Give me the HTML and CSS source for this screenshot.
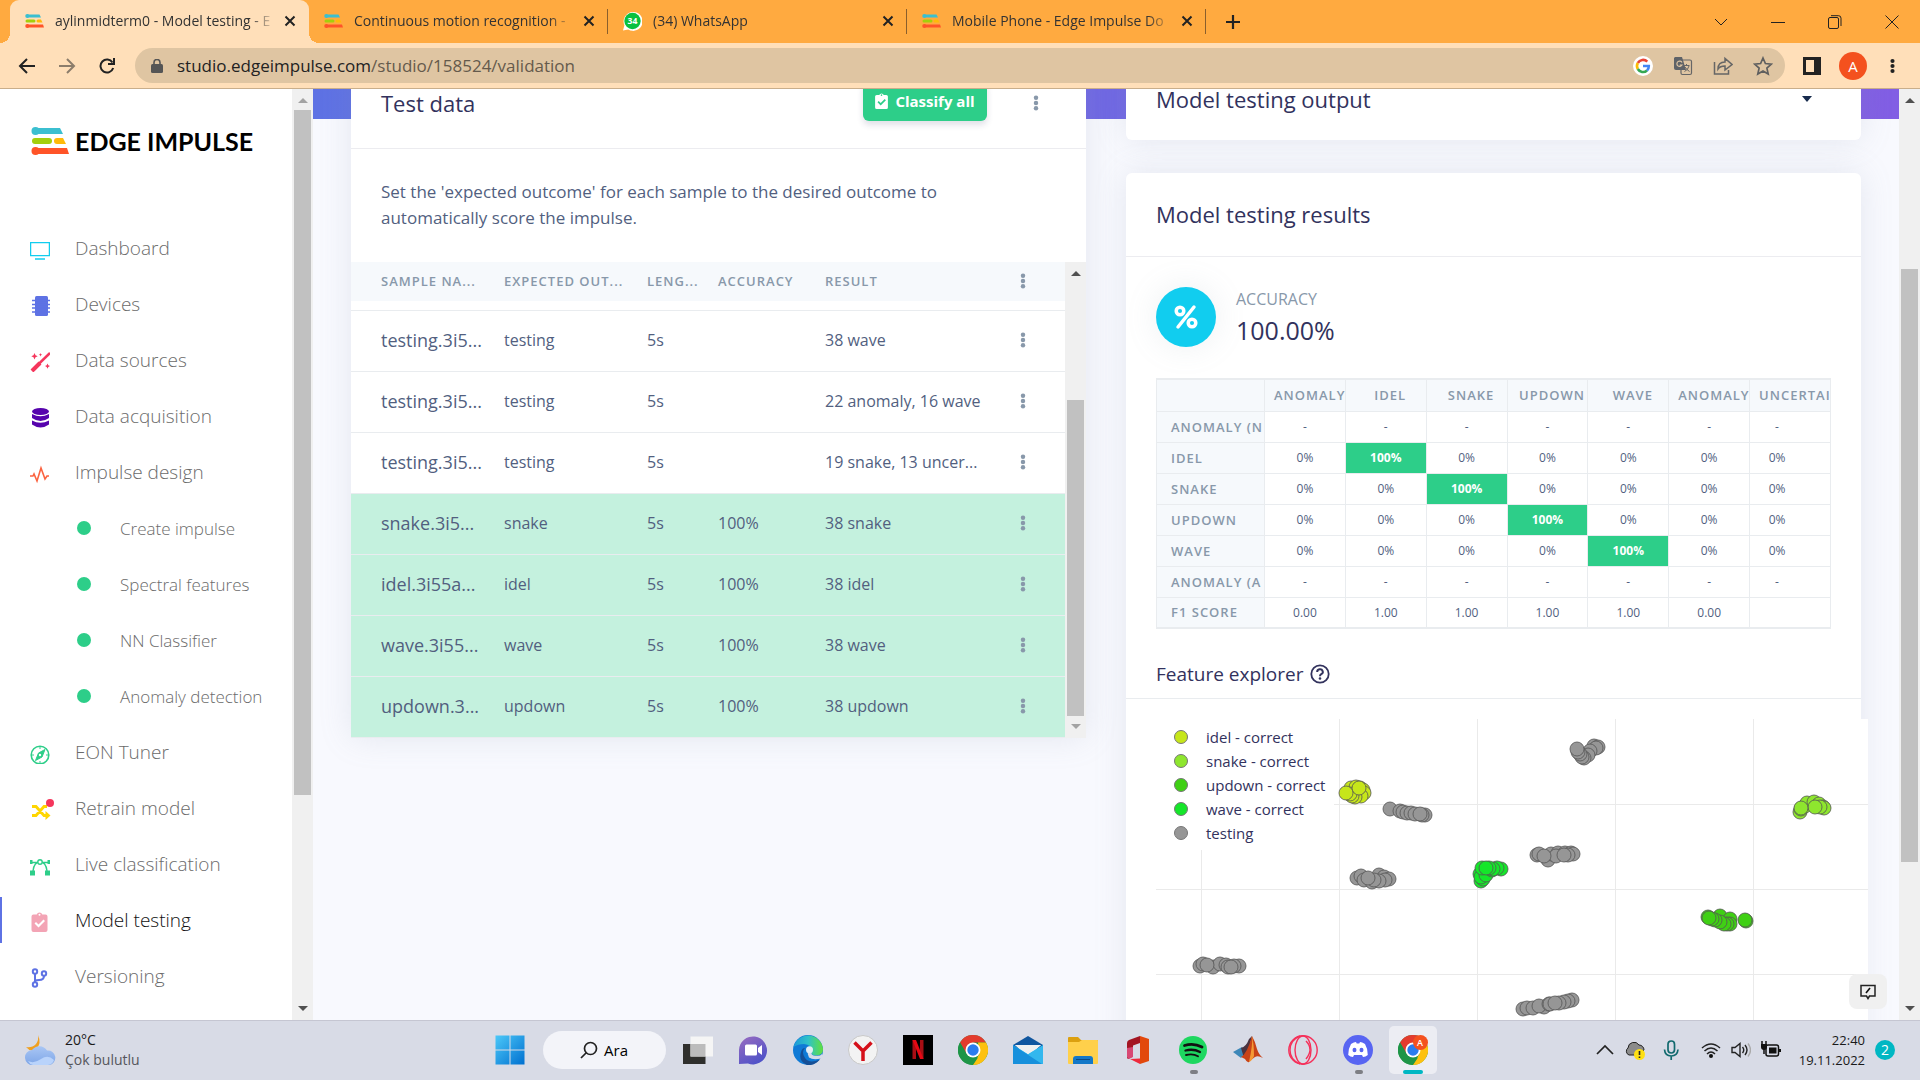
FILE: index.html
```html
<!DOCTYPE html>
<html lang="en">
<head>
<meta charset="utf-8">
<title>aylinmidterm0 - Model testing - Edge Impulse</title>
<link rel="stylesheet" href="styles.css">
</head>
<body>
<svg class="defs" aria-hidden="true">
  <symbol id="ei" viewBox="0 0 38 28"><path d="M4 1H29l3 6H4z" fill="#3bbfd0"/><circle cx="4.500" cy="4" r="4" fill="#3bbfd0"/><rect x="1" y="11" width="20" height="6" rx="3" fill="#a4cf0c"/><path d="M26 11h6l3 6H26a3 3 0 0 1 0-6z" fill="#ffba08"/><path d="M4 21H36l2 6H4z" fill="#ff5428"/><circle cx="4.500" cy="24" r="4" fill="#ff5428"/></symbol>
  <symbol id="x" viewBox="0 0 12 12"><path d="M1.500 1.500l9 9M10.500 1.500l-9 9" stroke="#222" stroke-width="2" fill="none"/></symbol>
  <symbol id="dots" viewBox="0 0 6 18"><circle cx="3" cy="3" r="2.500"/><circle cx="3" cy="9" r="2.500"/><circle cx="3" cy="15" r="2.500"/></symbol>
  <symbol id="clip" viewBox="0 0 16 20"><path fill-rule="evenodd" d="M2 2.500h3.200a3 3 0 0 1 5.600 0H14a2 2 0 0 1 2 2V18a2 2 0 0 1-2 2H2a2 2 0 0 1-2-2V4.500a2 2 0 0 1 2-2zM8 1.700a1 1 0 1 0 0 2 1 1 0 0 0 0-2zM3 11.500l4 4 6.500-6.500-1.500-1.500-5 5-2.500-2.500z"/></symbol>
  <symbol id="chrome" viewBox="0 0 30 30"><circle cx="15" cy="15" r="15" fill="#1e9547"/><path d="M2 7.500A15 15 0 0 1 28 7.500H15L8.500 18.700z" fill="#e33b2e"/><path d="M28 7.500A15 15 0 0 1 14.500 30L21.500 18.700 20 7.500z" fill="#fdc10f"/><path d="M2 7.500L8.500 18.700 15 22.500H20L15 30A15 15 0 0 1 2 7.500z" fill="#1e9547"/><circle cx="15" cy="15" r="7.500" fill="#fff"/><circle cx="15" cy="15" r="5.700" fill="#2a7cee"/></symbol>
</svg>

<header class="tabstrip">
  <div class="tab active"><svg class="fav"><use href="#ei"/></svg><span>aylinmidterm0 - Model testing - E</span><button aria-label="Close tab"><svg><use href="#x"/></svg></button></div>
  <div class="tab"><svg class="fav"><use href="#ei"/></svg><span>Continuous motion recognition -</span><button aria-label="Close tab"><svg><use href="#x"/></svg></button></div>
  <div class="tab"><svg class="fav wa" viewBox="0 0 20 20"><path d="M0 20l1.500-5.500A10 10 0 1 1 5.500 19z" fill="#fff"/><circle cx="10" cy="10" r="8.600" fill="#09c13f"/><text x="10" y="13.500" text-anchor="middle">34</text></svg><span>(34) WhatsApp</span><button aria-label="Close tab"><svg><use href="#x"/></svg></button></div>
  <div class="tab"><svg class="fav"><use href="#ei"/></svg><span>Mobile Phone - Edge Impulse Do</span><button aria-label="Close tab"><svg><use href="#x"/></svg></button></div>
  <button class="newtab" aria-label="New tab"><svg viewBox="0 0 16 16"><path d="M8 1v14M1 8h14" stroke="#222" stroke-width="2.200"/></svg></button>
  <div class="winbtns">
    <button aria-label="Search tabs"><svg viewBox="0 0 14 14"><path d="M1 4l6 6 6-6"/></svg></button>
    <button aria-label="Minimize"><svg viewBox="0 0 14 14"><path d="M0 7.500h14"/></svg></button>
    <button aria-label="Restore"><svg viewBox="0 0 14 14"><rect x=".5" y="2.500" width="10" height="11" rx="1.500"/><path d="M3 .7h7.500a2.500 2.500 0 0 1 2.500 2.500V11"/></svg></button>
    <button aria-label="Close"><svg viewBox="0 0 14 14"><path d="M.5.5l13 13M13.500.5l-13 13"/></svg></button>
  </div>
</header>

<nav class="toolbar" aria-label="Browser">
  <button aria-label="Back"><svg viewBox="0 0 18 16"><path d="M17 8H2M9 1L2 8l7 7" stroke="#222"/></svg></button>
  <button aria-label="Forward"><svg viewBox="0 0 18 16"><path d="M1 8h15M9 1l7 7-7 7" stroke="#8c7d6b"/></svg></button>
  <button aria-label="Reload"><svg viewBox="0 0 18 16"><path d="M14.500 4.500A6.500 6.500 0 1 0 15.200 10M16 0v6h-6" stroke="#222"/></svg></button>
  <div class="address">
    <svg class="lock" viewBox="0 0 12 14"><rect y="5" width="12" height="9" rx="1.500" fill="#555"/><path d="M3 6V3.500a3 3 0 0 1 6 0V6" fill="none" stroke="#555" stroke-width="1.600"/></svg>
    <p>studio.edgeimpulse.com<span>/studio/158524/validation</span></p>
    <svg viewBox="0 0 20 20"><circle cx="10" cy="10" r="10" fill="#fff"/><g fill="none" stroke-width="2.600"><path d="M14.300 5.700A6 6 0 0 0 4.800 7" stroke="#ea4335"/><path d="M4.800 7a6 6 0 0 0 0 6" stroke="#fbbc05"/><path d="M4.800 13a6 6 0 0 0 9.200 1.500" stroke="#34a853"/><path d="M14 14.500A6 6 0 0 0 15.800 10H10" stroke="#4285f4"/></g></svg>
    <svg viewBox="0 0 20 20"><rect x="8" y="4" width="10.500" height="14.500" rx="1.500" fill="none" stroke="#666" stroke-width="1.200"/><path d="M2 1h7l4 13H3a2 2 0 0 1-2-2V2z" fill="#5f6368"/><path d="M9 6.500A2.700 2.700 0 1 0 9 9H6.800" stroke="#dfc5a2" fill="none" stroke-width="1.200"/><path d="M10.500 9.500h6M13.500 8v1.500M16 10q-1 4-4.500 5.500M12 11q2 3 4.500 4.500" stroke="#666" fill="none"/></svg>
    <svg viewBox="0 0 20 20"><g fill="none" stroke="#666" stroke-width="1.500"><path d="M1.500 6v12h14v-4"/><path d="M5 13q0-7 7-7V2.500l7 6-7 5.500V10q-5 0-7 3z"/></g></svg>
    <svg viewBox="0 0 20 20"><path d="M10 2l2.400 5.500 6 .6-4.500 4 1.300 5.900L10 14.900 4.800 18l1.300-5.900-4.500-4 6-.6z" fill="none" stroke="#5f5f5f" stroke-width="1.700"/></svg>
  </div>
  <button class="panel" aria-label="Side panel"><svg viewBox="0 0 18 18"><rect x="1.500" y="1.500" width="15" height="15" fill="none" stroke="#222" stroke-width="3"/><path d="M11 0h7v18h-7z" fill="#222"/></svg></button>
  <button class="avatar">A</button>
  <button class="menu" aria-label="Menu"><svg><use href="#dots"/></svg></button>
</nav>

<div class="page">
  <aside class="sidebar">
    <div class="side-body">
      <a class="logo" href="#"><svg><use href="#ei"/></svg>EDGE IMPULSE</a>
      <ul>
        <li><a href="#"><svg viewBox="0 0 20 20"><path d="M.6 2.600h18.800v13H.6zM5 19h10" fill="none" stroke="#11cdef" stroke-width="1.300"/></svg>Dashboard</a></li>
        <li><a href="#"><svg viewBox="0 0 20 20"><rect x="5" width="13" height="20" rx="1.500" fill="#5e72e4"/><path d="M2 4.500h18.500M2 8.500h18.500M2 12h18.500M2 16h18.500" stroke="#5e72e4" stroke-width="1.600"/></svg>Devices</a></li>
        <li><a href="#"><svg viewBox="0 0 20 20"><path d="M2 18.500L20 1" stroke="#f5365c" stroke-width="2.500"/><path d="M2 19l8-8" stroke="#f5365c" stroke-width="4"/><path d="M4.500 1l1 2.200 2.200 1-2.200 1-1 2.300-1-2.300-2.200-1 2.200-1zM17.500 11.500l.8 1.800 1.700.8-1.700.8-.8 1.800-.8-1.800-1.700-.8 1.700-.8zM10.500 1l.5 1.200 1.200.5-1.200.5-.5 1.200-.5-1.200-1.200-.5 1.200-.5z" fill="#f5365c"/></svg>Data sources</a></li>
        <li><a href="#"><svg viewBox="0 0 20 20"><g fill="#5603ad"><ellipse cx="10.500" cy="3.500" rx="8.500" ry="3.500"/><path d="M2 6q8.500 4.500 17 0v4q-8.500 6-17 0z"/><path d="M2 12.500q8.500 4.500 17 0v4q-8.500 6-17 0z"/></g></svg>Data acquisition</a></li>
        <li><a href="#"><svg viewBox="0 0 20 20"><path d="M0 12h3l1-2 3 7 4-13 4 11 2-3h2" fill="none" stroke="#fb6340" stroke-width="1.600"/></svg>Impulse design</a></li>
        <li class="sub"><a href="#"><i></i>Create impulse</a></li>
        <li class="sub"><a href="#"><i></i>Spectral features</a></li>
        <li class="sub"><a href="#"><i></i>NN Classifier</a></li>
        <li class="sub"><a href="#"><i></i>Anomaly detection</a></li>
        <li><a href="#"><svg viewBox="0 0 20 20"><circle cx="10" cy="11" r="8.800" fill="none" stroke="#2dce89" stroke-width="1.600"/><path d="M15 5.500l-3 7.500-6.500 3.500 3-7.500zM10 3v2M10 17v2M2 11h2M16 11h2" fill="#2dce89" stroke="#2dce89"/><circle cx="10" cy="11" r="1.200" fill="#fff"/></svg>EON Tuner</a></li>
        <li><a href="#"><svg class="over" viewBox="0 0 20 20"><path d="M2 6.500h4l8 9h3M2 15.500h4l8-9h3" fill="none" stroke="#ffd600" stroke-width="2.800"/><path d="M15.500 11l5 4.500-5 4.500z" fill="#ffd600"/><circle cx="20" cy="3" r="4" fill="#f5365c"/></svg>Retrain model</a></li>
        <li><a href="#"><svg viewBox="0 0 20 20"><g fill="none" stroke="#2dce89" stroke-width="1.400"><path d="M3 15q1-9 7-9t7 9M2 6.500h16"/><circle cx="10" cy="6" r="2.200" fill="#fff"/></g><path d="M0 14.500h5v5H0zM15 14.500h5v5h-5zM0 4h2.500v4H0zM17.500 4H20v4h-2.500z" fill="#2dce89"/></svg>Live classification</a></li>
        <li class="current"><a href="#"><svg fill="#f3a4b5"><use href="#clip" width="19" height="20"/></svg>Model testing</a></li>
        <li><a href="#"><svg viewBox="0 0 20 20"><g fill="none" stroke="#5e72e4" stroke-width="2"><circle cx="5" cy="3.500" r="2.200"/><circle cx="5" cy="16.500" r="2.200"/><circle cx="14" cy="5.500" r="2.200"/><path d="M5 6v8M14 8q0 4-5 4t-4 2"/></g></svg>Versioning</a></li>
      </ul>
    </div>
    <div class="scroll s1"><b class="up dim"></b><i></i><b class="down"></b></div>
  </aside>

  <main>
    <div class="content">
      <section class="card left">
        <header><h2>Test data</h2><button class="classify"><svg fill="#fff"><use href="#clip"/></svg>Classify all</button><button class="kebab" aria-label="More"><svg><use href="#dots"/></svg></button></header>
        <p class="desc">Set the 'expected outcome' for each sample to the desired outcome to automatically score the impulse.</p>
        <div class="scroller">
          <table class="samples">
            <colgroup><col class="c1"><col class="c2"><col class="c3"><col class="c4"><col class="c5"><col class="c6"></colgroup>
            <thead><tr><th>SAMPLE NA...</th><th>EXPECTED OUT...</th><th>LENG...</th><th>ACCURACY</th><th>RESULT</th><th><button class="kebab" aria-label="Columns"><svg><use href="#dots"/></svg></button></th></tr></thead>
            <tbody>
              <tr class="cut"><td colspan="6"></td></tr>
              <tr><td>testing.3i5...</td><td>testing</td><td>5s</td><td></td><td>38 wave</td><td><button class="kebab" aria-label="More"><svg><use href="#dots"/></svg></button></td></tr>
              <tr><td>testing.3i5...</td><td>testing</td><td>5s</td><td></td><td>22 anomaly, 16 wave</td><td><button class="kebab" aria-label="More"><svg><use href="#dots"/></svg></button></td></tr>
              <tr><td>testing.3i5...</td><td>testing</td><td>5s</td><td></td><td>19 snake, 13 uncer...</td><td><button class="kebab" aria-label="More"><svg><use href="#dots"/></svg></button></td></tr>
              <tr class="ok"><td>snake.3i5...</td><td>snake</td><td>5s</td><td>100%</td><td>38 snake</td><td><button class="kebab" aria-label="More"><svg><use href="#dots"/></svg></button></td></tr>
              <tr class="ok"><td>idel.3i55a...</td><td>idel</td><td>5s</td><td>100%</td><td>38 idel</td><td><button class="kebab" aria-label="More"><svg><use href="#dots"/></svg></button></td></tr>
              <tr class="ok"><td>wave.3i55...</td><td>wave</td><td>5s</td><td>100%</td><td>38 wave</td><td><button class="kebab" aria-label="More"><svg><use href="#dots"/></svg></button></td></tr>
              <tr class="ok"><td>updown.3...</td><td>updown</td><td>5s</td><td>100%</td><td>38 updown</td><td><button class="kebab" aria-label="More"><svg><use href="#dots"/></svg></button></td></tr>
            </tbody>
          </table>
          <div class="scroll s2"><b class="up"></b><i></i><b class="down dim"></b></div>
        </div>
      </section>

      <div class="right">
        <section class="card output"><header><h2>Model testing output</h2><b class="caret"></b></header></section>
        <section class="card results">
          <header><h2>Model testing results</h2></header>
          <div class="body">
            <div class="accuracy"><span class="disc"><svg viewBox="0 0 24 26"><g fill="none" stroke="#fff" stroke-width="3.500" stroke-linecap="round"><path d="M20 3L4 23"/><circle cx="6" cy="7" r="3.800"/><circle cx="18" cy="19" r="3.800"/></g></svg></span><dl><dt>ACCURACY</dt><dd>100.00%</dd></dl></div>
            <table class="matrix">
              <colgroup><col class="first"><col><col><col><col><col><col><col></colgroup>
              <thead><tr><th></th><th>ANOMALY</th><th>IDEL</th><th>SNAKE</th><th>UPDOWN</th><th>WAVE</th><th>ANOMALY</th><th>UNCERTAIN</th></tr></thead>
              <tbody>
                <tr><th>ANOMALY (N</th><td>-</td><td>-</td><td>-</td><td>-</td><td>-</td><td>-</td><td>-</td></tr>
                <tr><th>IDEL</th><td>0%</td><td class="hit">100%</td><td>0%</td><td>0%</td><td>0%</td><td>0%</td><td>0%</td></tr>
                <tr><th>SNAKE</th><td>0%</td><td>0%</td><td class="hit">100%</td><td>0%</td><td>0%</td><td>0%</td><td>0%</td></tr>
                <tr><th>UPDOWN</th><td>0%</td><td>0%</td><td>0%</td><td class="hit">100%</td><td>0%</td><td>0%</td><td>0%</td></tr>
                <tr><th>WAVE</th><td>0%</td><td>0%</td><td>0%</td><td>0%</td><td class="hit">100%</td><td>0%</td><td>0%</td></tr>
                <tr><th>ANOMALY (A</th><td>-</td><td>-</td><td>-</td><td>-</td><td>-</td><td>-</td><td>-</td></tr>
                <tr><th>F1 SCORE</th><td>0.00</td><td>1.00</td><td>1.00</td><td>1.00</td><td>1.00</td><td>0.00</td><td></td></tr>
              </tbody>
            </table>
            <h3>Feature explorer <svg viewBox="0 0 20 20"><circle cx="10" cy="10" r="8.700" fill="none" stroke="#32325d" stroke-width="1.800"/><path d="M7.200 8a2.800 2.600 0 1 1 4 2.200q-1.200.7-1.200 2" fill="none" stroke="#32325d" stroke-width="2"/><circle cx="10" cy="14.500" r="1.300" fill="#32325d"/></svg></h3>
          </div>
          <div class="explorer">
            <svg class="plot" viewBox="0 0 712 340" id="plot"><rect width="712" height="340" fill="#fff"/><path d="M183.500 0V340M321.500 0V340M459.500 0V340M597.500 0V340M45.500 131V340M178 85.500H712M0 170.500H712M0 255.500H712" stroke="#eaeaea" fill="none"/></svg>
            <ul class="legend"><li><i class="k1"></i>idel - correct</li><li><i class="k2"></i>snake - correct</li><li><i class="k3"></i>updown - correct</li><li><i class="k4"></i>wave - correct</li><li><i class="k5"></i>testing</li></ul>
          </div>
        </section>
      </div>
    </div>
    <button class="feedback" aria-label="Feedback"><svg viewBox="0 0 16 16"><path d="M1 1.500h14v10.500H9.500L8 14.500 6.500 12H1z" fill="none" stroke="#222" stroke-width="1.500"/><path d="M6 9l4-5" stroke="#111" stroke-width="1.600"/></svg></button>
  </main>
  <div class="scroll s3"><b class="up"></b><i></i><b class="down"></b></div>
</div>

<footer class="taskbar">
  <div class="weather">
    <svg viewBox="0 0 32 32"><defs><linearGradient id="cl" x2="0" y2="1"><stop stop-color="#a9c6f4"/><stop offset="1" stop-color="#7ea6e8"/></linearGradient></defs><path d="M13 1q4 9-2 14-5 4-10-2 6 1 10-3 3-4 2-9z" fill="#f0a020"/><path d="M8 31a7.500 7.500 0 0 1-1-15A9 9 0 0 1 22 16.500a7.300 7.300 0 0 1 2 14.500z" fill="url(#cl)"/><path d="M3 27q6 3 13-2t13 1a7 7 0 0 1-6 5H8a7 7 0 0 1-5-4z" fill="#b9d3fb"/></svg>
    <p>20°C<span>Çok bulutlu</span></p>
  </div>
  <div class="apps">
    <button aria-label="Start"><svg viewBox="0 0 30 30"><defs><linearGradient id="w" x2="1" y2="1"><stop stop-color="#4cc8f8"/><stop offset="1" stop-color="#0070d0"/></linearGradient></defs><path d="M.5.5h14v14H.5zM15.500.5h14v14h-14zM.5 15.500h14v14H.5zM15.500 15.500h14v14h-14z" fill="url(#w)"/></svg></button>
    <button class="search"><svg viewBox="0 0 18 18"><circle cx="10.500" cy="7.500" r="6" fill="none" stroke="#222" stroke-width="1.700"/><path d="M6.500 11.500l-5.500 5.500" stroke="#222" stroke-width="1.700"/></svg>Ara</button>
    <button aria-label="Task view"><svg viewBox="0 0 30 30"><path d="M0 9h22.500v20H0z" fill="#2f2f2d"/><path d="M7.500 1.500H30v20H7.500z" fill="#f5f5f5"/><path d="M7.500 9h15v12.500h-15z" fill="#bcbcbc"/></svg></button>
    <button aria-label="Chat"><svg viewBox="0 0 30 30"><defs><linearGradient id="ch" x2=".6" y2="1"><stop stop-color="#9a6cc0"/><stop offset="1" stop-color="#4f52c8"/></linearGradient></defs><path d="M1 29V15A14 14 0 1 1 10 28.500z" fill="url(#ch)"/><rect x="7" y="9.500" width="12" height="11" rx="1.500" fill="#fff"/><path d="M20 13l4-3v10l-4-3z" fill="#fff"/></svg></button>
    <button aria-label="Edge"><svg viewBox="0 0 30 30"><defs><linearGradient id="e1"><stop stop-color="#1d98d8"/><stop offset=".5" stop-color="#2fc2c8"/><stop offset="1" stop-color="#62e03c"/></linearGradient></defs><circle cx="15" cy="15" r="15" fill="#0f7ad6"/><path d="M.5 12A15 15 0 0 1 30 14q0 6.500-7 6.500-5 0-4-4 0-7-8-7.500-6 0-10.500 3z" fill="url(#e1)"/><path d="M12 13q-4 4 0 10t15 1.500Q21 31 14 30 5 26 8 17q1-4 4-4z" fill="#154f96"/><path d="M19 16q-2 4 3 4.700t7-1.700l1 3-2 1.500q-8 2-12-1-2-3-1-7z" fill="#d6dbe7"/><circle cx="16.500" cy="14.800" r="3.500" fill="#e3edf5"/></svg></button>
    <button aria-label="Yandex"><svg viewBox="0 0 30 30"><circle cx="15" cy="15" r="14.500" fill="#f3f3f3" stroke="#c8c8c8"/><path d="M6.500 7.500L15 16l8.500-8.500M15 15v11" fill="none" stroke="#d5101a" stroke-width="3.500"/></svg></button>
    <button aria-label="Netflix"><svg viewBox="0 0 30 30"><path d="M0 0h30v30H0z"/><path d="M9.500 5H13v19H9.500zM17 5h3.500v19H17z" fill="#a80e14"/><path d="M9.500 5H13l7.500 19H17z" fill="#e50914"/></svg></button>
    <button aria-label="Chrome"><svg><use href="#chrome"/></svg></button>
    <button aria-label="Mail"><svg viewBox="0 0 30 30"><path d="M0 10L15 1l15 9v6H0z" fill="#10569f"/><path d="M2 10h26L15 22z" fill="#f4f4f4"/><path d="M0 10l15 9L30 10v19H0z" fill="#33b7ee"/><path d="M0 10l29 19H0z" fill="#1790dc"/><path d="M2 10h26l-13 9z" fill="#f0f0f0"/></svg></button>
    <button aria-label="File Explorer"><svg viewBox="0 0 30 30"><path d="M0 3q0-1 1-1h9l3 3h16q1 0 1 1v8H0z" fill="#dca010"/><path d="M0 7h11l3-2h15q1 0 1 1v22q0 1-1 1H1q-1 0-1-1z" fill="#ffd04b"/><path d="M5 29v-5q0-3 3-3h14q3 0 3 3v5z" fill="#1478c8"/><path d="M8 24.500h14" stroke="#0b4a85"/></svg></button>
    <button aria-label="Office"><svg viewBox="0 0 30 30"><path d="M17 1l9 3v22l-9 3z" fill="#e2480c"/><path d="M17 1v7l-7 2.500v11L5 24q-1-.5-1-2V8q0-2 2-3z" fill="#a31522"/><path d="M10 12v10l-4 2-2-2V13z" fill="#d84874"/><path d="M7 24l10-.5V29z" fill="#ee2a3d"/></svg></button>
    <button aria-label="Spotify" class="run"><svg viewBox="0 0 30 30"><circle cx="15" cy="15" r="14" fill="#1ed760"/><g fill="none" stroke="#111" stroke-linecap="round"><path d="M6.500 10.500q9-3 17.500 1.500" stroke-width="2.800"/><path d="M7.500 15.500q8-2 14.500 1.500" stroke-width="2.300"/><path d="M8 20q7-1.700 12 1.300" stroke-width="1.900"/></g></svg></button>
    <button aria-label="MATLAB"><svg viewBox="0 0 30 30"><path d="M0 17l9-5 4 5-5 6z" fill="#3d87b8"/><path d="M8 13q5-1 8-9l3-3-4 18-4 4z" fill="#4a3340"/><path d="M19 1q3 5 5 13 2 6 6 9-5-3-8-1t-6 5q-2 1-4-3l-4-2q6-3 11-21z" fill="#c84318"/><path d="M19 1q1 8-3 26 3-1 5-6 0-12-2-20z" fill="#f49a35"/></svg></button>
    <button aria-label="Opera GX"><svg viewBox="0 0 30 30"><g fill="none" stroke="#f5305a" stroke-width="1.400"><circle cx="15" cy="15" r="14.200"/><ellipse cx="15" cy="15" rx="8" ry="14"/><path d="M18 6q8 8 0 18"/><path d="M12 1q-10 4-10 14t10 14"/></g></svg></button>
    <button aria-label="Discord" class="run"><svg viewBox="0 0 30 30"><circle cx="15" cy="15" r="15" fill="#5865f2"/><path d="M8 9q3-2 5-2l.7 1.500h2.600L17 7q2 0 5 2 3 5 2.800 11-2.300 2-4.800 2l-1-2h-8l-1 2q-2.500 0-4.800-2Q5 14 8 9z" fill="#fff"/><ellipse cx="11.500" cy="15" rx="2" ry="2.200" fill="#5865f2"/><ellipse cx="18.500" cy="15" rx="2" ry="2.200" fill="#5865f2"/></svg></button>
    <button aria-label="Chrome, profile A" class="focus"><svg><use href="#chrome"/></svg><em>A</em></button>
  </div>
  <div class="tray">
    <svg viewBox="0 0 20 20"><path d="M2 14l8-8 8 8" fill="none" stroke="#222" stroke-width="1.700"/></svg>
    <svg class="cloud" viewBox="0 0 20 20"><path d="M4 15a4 4 0 0 1-1-7 6 6 0 0 1 11-3 5 5 0 0 1 5 5l-6 5z" fill="#8b8b8b" stroke="#222"/><circle cx="14.500" cy="14.500" r="5.500" fill="#fee012"/><path d="M14.500 11v4M14.500 16.500v1.500" stroke="#222" stroke-width="1.600"/></svg>
    <svg class="mic" viewBox="0 0 20 20"><g fill="none" stroke="#126a6e" stroke-width="1.700"><rect x="7" y="1" width="6.500" height="12" rx="3.200"/><path d="M3.500 9.500q.5 6.500 6.700 6.500T17 9.500M10.200 16v4"/></g></svg>
    <svg viewBox="0 0 20 20"><g fill="none" stroke="#222" stroke-width="1.500"><path d="M1 8q9-8 18 0M3.500 11q6.500-6 13 0M6 14q4-4 8 0"/></g><circle cx="10" cy="16" r="2" fill="#111"/></svg>
    <svg viewBox="0 0 20 20"><g fill="none" stroke="#222" stroke-width="1.400"><path d="M1 7.500h3l5-4v13l-5-4H1zM11.500 7q2.500 3 0 6M14 5q4 5 0 10"/><path d="M17 3.500q5 6.500 0 13" stroke="#aaa"/></g></svg>
    <svg viewBox="0 0 20 20"><rect x="5" y="5" width="12.500" height="11" rx="2" fill="none" stroke="#111" stroke-width="1.500"/><path d="M8 7.500h7.500v6H8zM18 9h2v3h-2z" fill="#111"/><path d="M1 1v4M5 1v4M3 9v5" stroke="#111" stroke-width="1.500"/><path d="M0 4h6v3a3 3 0 0 1-6 0z" fill="#111"/></svg>
    <p>22:40<span>19.11.2022</span></p>
    <span class="badge">2</span>
  </div>
</footer>
<script src="plot.js"></script>
</body>
</html>
```
FILE: styles.css
```css
* { box-sizing: border-box; margin: 0; padding: 0; }
body { height: 100vh; display: flex; flex-direction: column; overflow: hidden; font-family: "Open Sans", "Noto Sans", sans-serif; color: #525f7f; }
button { font: inherit; border: 0; background: none; display: flex; align-items: center; justify-content: center; flex-shrink: 0; }
ul { list-style: none; }
a { text-decoration: none; color: inherit; }
svg { flex-shrink: 0; }
.defs { position: absolute; width: 0; height: 0; }

/* browser tabs */
.tabstrip { height: 43px; background: #ffaa40; display: flex; align-items: center; padding-left: 10px; flex-shrink: 0; }
.tab { width: 299px; height: 43px; display: flex; align-items: center; padding: 0 13px 2px 15px; color: #333; font-size: 14px; position: relative; }
.tab .fav { width: 19px; height: 14px; margin-right: 11px; }
.tab .wa { height: 20px; font-size: 9px; font-weight: 700; fill: #fff; }
.tab span { flex: 1; overflow: hidden; white-space: nowrap; margin-right: 8px; -webkit-mask-image: linear-gradient(90deg, #000 88%, transparent); mask-image: linear-gradient(90deg, #000 88%, transparent); }
.tab button svg { width: 12px; height: 12px; }
.tab:not(.active)::after { content: ""; position: absolute; right: 0; top: 9px; height: 25px; width: 1px; background: #8a5f2c; }
.tab.active { background: #ffdfb9; border-radius: 9px 9px 0 0; }
.tab.active::before, .tab.active::after { content: ""; position: absolute; bottom: 0; width: 10px; height: 10px; background: radial-gradient(circle at 0 0, transparent 10px, #ffdfb9 10px); left: -10px; }
.tab.active::after { left: auto; right: -10px; background: radial-gradient(circle at 100% 0, transparent 10px, #ffdfb9 10px); }
.newtab { width: 54px; }
.newtab svg { width: 16px; height: 16px; }
.winbtns { margin-left: auto; display: flex; height: 38px; }
.winbtns button { width: 57px; }
.winbtns svg { width: 14px; height: 14px; fill: none; stroke: #222; stroke-width: 1; }

/* browser toolbar */
.toolbar { height: 46px; background: #ffdfb9; border-bottom: 1px solid #c9ae8b; display: flex; align-items: center; flex-shrink: 0; padding: 0 8px 0 7px; }
.toolbar > button { width: 40px; }
.toolbar > button svg { width: 18px; height: 16px; fill: none; stroke-width: 2; }
.address { flex: 1; height: 35px; border-radius: 18px; background: #dfc5a2; display: flex; align-items: center; gap: 20px; padding: 0 12px 0 16px; margin: 0 7px 0 8px; }
.address svg { width: 20px; height: 20px; }
.address .lock { width: 12px; height: 14px; }
.address p { flex: 1; font-size: 17px; color: #222; margin-left: -6px; }
.address p span { color: #655a4c; }
.toolbar .panel svg { height: 18px; }
.toolbar .avatar { width: 28px; height: 28px; border-radius: 50%; background: #f4511e; color: #fff; font-size: 15px; margin: 0 5px 0 7px; }
.toolbar .menu svg { width: 5px; height: 18px; fill: #222; }

/* scrollbars */
.scroll { width: 21px; flex-shrink: 0; background: #f0f0f0; display: flex; flex-direction: column; align-items: center; padding: 9px 0; }
.scroll i { width: 17px; background: #c1c1c1; }
.scroll b { border: 5px solid transparent; }
.scroll .up { border-top: 0; border-bottom-color: #505050; }
.scroll .down { border-bottom: 0; border-top-color: #505050; margin-top: auto; }
.scroll .up.dim { border-bottom-color: #a3a3a3; }
.scroll .down.dim { border-top-color: #a3a3a3; }
.s1 i { height: 75%; margin-top: 7px; }
.s2 i { height: 316px; margin-top: 124px; }
.s3 i { height: 65%; margin-top: 166px; }

.page { flex: 1; min-height: 0; display: flex; }
.sidebar { width: 313px; flex-shrink: 0; display: flex; background: #fff; }
.side-body { flex: 1; overflow: hidden; }
.logo { display: flex; align-items: center; gap: 6px; height: 104px; padding-left: 31px; font: 700 25px Lato, sans-serif; color: #000; white-space: nowrap; }
.logo svg { width: 38px; height: 28px; }
.side-body ul { padding-top: 27px; }
.side-body li { height: 56px; display: flex; align-items: center; font-size: 19px; font-weight: 300; color: #6b6b6b; }
.side-body li a { display: flex; align-items: center; gap: 25px; padding-left: 30px; height: 46px; flex: 1; white-space: nowrap; }
.side-body li svg { width: 20px; height: 20px; margin-top: 3px; }
.side-body li .over { overflow: visible; }
.side-body .sub { font-size: 17px; }
.side-body .sub a { padding-left: 77px; gap: 29px; }
.side-body .sub i { width: 14px; height: 14px; border-radius: 50%; background: #2dce89; }
.side-body .current { color: #111; }
.side-body .current a { border-left: 2px solid #5e72e4; padding-left: 28px; }

main { flex: 1; min-width: 0; position: relative; overflow: hidden; background: linear-gradient(90deg, #5e72e4, #825ee4) no-repeat 0 0 / 100% 30px #f8f9fe; }
.content { margin-top: -30px; display: flex; align-items: flex-start; gap: 40px; padding: 0 38px; }
.card { background: #fff; border-radius: 6px; box-shadow: 0 0 32px rgba(136, 152, 170, .18); }
.left, .right { flex: 1; min-width: 0; }
.card > header { display: flex; align-items: center; height: 90px; padding: 0 30px 2px; border-bottom: 1px solid #ececf0; }
.card h2 { font-size: 22px; font-weight: 500; color: #32325d; flex: 1; }
.classify { height: 41px; width: 124px; gap: 7px; border-radius: 6px; background: #2dce89; color: #fff; font-size: 15px; font-weight: 700; margin: 0 46px 4px 0; box-shadow: 0 4px 6px rgba(50, 50, 93, .15); }
.classify svg { width: 13px; height: 16px; }
.kebab svg { width: 6px; height: 16px; fill: #8898aa; }
.left > header .kebab { margin-right: 17px; }
.desc { padding: 30px 60px 30px 30px; height: 113px; font-size: 17px; line-height: 26px; }

.scroller { display: flex; align-items: stretch; }
.samples { flex: 1; table-layout: fixed; border-collapse: collapse; width: 714px; }
.c1 { width: 138px; } .c2 { width: 143px; } .c3 { width: 71px; } .c4 { width: 107px; } .c5 { width: 189px; } .c6 { width: 66px; }
.samples th, .samples td { text-align: left; padding-left: 15px; white-space: nowrap; }
.samples th:first-child, .samples td:first-child { padding-left: 30px; }
.samples th { height: 39px; padding-bottom: 2px; background: #f6f9fc; font-size: 13px; font-weight: 600; letter-spacing: 1px; color: #8898aa; }
.samples td { height: 61px; padding-bottom: 1px; font-size: 16px; border-bottom: 1px solid #e9ecef; }
.samples td:first-child { font-size: 18px; font-weight: 500; }
.samples .cut td { height: 9px; }
.samples .ok { background: #c4f1de; }
.samples .kebab { margin-left: 6px; }

.right { display: flex; flex-direction: column; gap: 33px; }
.output > header { height: 81px; border: 0; }
.caret { border: 5px solid transparent; border-top: 6px solid #172b4d; border-bottom: 0; margin-right: 19px; }
.results > header { height: 84px; }
.body { padding: 30px 30px 0; }
.accuracy { display: flex; gap: 20px; height: 91px; }
.disc { width: 60px; height: 60px; border-radius: 50%; background: #11cdef; display: flex; align-items: center; justify-content: center; box-shadow: 0 0 32px rgba(136, 152, 170, .15); }
.disc svg { width: 24px; height: 26px; }
.accuracy dt { font-size: 16px; font-weight: 500; line-height: 24px; color: #8898aa; }
.accuracy dd { font-size: 25px; font-weight: 500; line-height: 38px; color: #32325d; }
.matrix { width: 100%; table-layout: fixed; border-collapse: collapse; border: 2px solid #e9ecef; border-width: 2px 1px; }
.matrix .first { width: 108px; }
.matrix th, .matrix td { height: 31px; border: 1px solid #e9ecef; font-size: 12px; text-align: center; overflow: hidden; white-space: nowrap; }
.matrix th { background: #f6f9fc; font-size: 13px; font-weight: 600; letter-spacing: 1px; color: #8898aa; padding-left: 9px; }
.matrix thead th { height: 32px; }
.matrix tbody th { text-align: left; padding-left: 14px; }
.matrix .hit { background: #2dce89; color: #fff; font-weight: 700; }
.matrix td:last-child { padding-right: 26px; }
.body h3 { font-size: 19px; font-weight: 500; color: #32325d; height: 69px; display: flex; align-items: center; gap: 6px; padding-top: 20px; }
.body h3 svg { width: 20px; height: 20px; }
.explorer { border-top: 1px solid #e9ecef; padding: 20px 0 0 30px; position: relative; }
.plot { width: 712px; height: 340px; display: block; }
.plot circle { stroke: #555; stroke-opacity: .8; stroke-width: 1; }
.legend { position: absolute; left: 48px; top: 26px; font-size: 15px; color: #32325d; }
.legend li { height: 24px; display: flex; align-items: center; gap: 18px; }
.legend i { width: 14px; height: 14px; border-radius: 50%; border: 1px solid #777; }
.k1 { background: #c6e61a; } .k2 { background: #8ee62e; } .k3 { background: #3fd014; } .k4 { background: #15e62a; } .k5 { background: #969696; }
.feedback { position: absolute; right: 12px; bottom: 11px; width: 38px; height: 35px; border-radius: 8px; background: #f0f0f0; }
.feedback svg { width: 16px; height: 16px; }

/* desktop taskbar */
.taskbar { height: 60px; flex-shrink: 0; background: #d8dbe6; border-top: 1px solid #c5c6d2; padding-bottom: 2px; display: grid; grid-template-columns: 1fr auto 1fr; align-items: center; color: #1a1a1a; font-size: 14px; line-height: 20px; }
.weather { display: flex; align-items: center; gap: 8px; padding-left: 25px; }
.weather svg { width: 32px; height: 32px; }
.weather span { display: block; color: #55565c; }
.apps { display: flex; align-items: center; padding-left: 2px; }
.apps button { width: 55px; height: 48px; position: relative; }
.apps svg { width: 30px; height: 30px; }
.apps .search { width: 123px; height: 38px; margin: 0 5px; border-radius: 19px; background: #f3f4f9; gap: 6px; font-size: 15px; }
.apps .search svg { width: 18px; height: 18px; }
.apps .run::after, .apps .focus::after { content: ""; position: absolute; left: 24px; bottom: 0; width: 8px; height: 4px; border-radius: 2px; background: #7d7e84; }
.apps .focus { width: 48px; margin: 0 3px; background: #ecedf3; border-radius: 5px; }
.apps .focus::after { left: 14px; width: 20px; background: #00b7c3; }
.apps em { position: absolute; right: 9px; top: 9px; width: 15px; height: 15px; border-radius: 50%; background: #f4511e; color: #fff; font: 600 9px/15px "Open Sans", sans-serif; }
.tray { display: flex; align-items: center; justify-content: flex-end; gap: 10px; padding-right: 25px; }
.tray svg { width: 20px; height: 20px; }
.tray .mic { margin: 0 10px 0 6px; }
.tray p { text-align: right; margin-left: 8px; font-size: 13px; }
.tray span { display: block; }
.tray .badge { width: 20px; height: 20px; border-radius: 50%; background: #00b7c3; color: #fff; text-align: center; }
```
FILE: plot.js
```js
// Sample clusters, in plot coordinates, drawn back to front.
const clusters = [
  ["#c6e61a", [[195,69],[200,68],[204,69],[207,71],[208,74],[205,77],[199,78],[196,77],[194,75],[203,69],[190,74]]],
  ["#969696", [[234,90],[244,92],[247,93],[251,94],[255,94],[259,95],[269,96],[266,96],[264,95]]],
  ["#969696", [[438,27],[442,28],[440,29],[434,32],[432,36],[428,39],[426,38],[424,35],[422,33],[421,30]]],
  ["#8ee62e", [[644,93],[645,90],[649,87],[651,84],[658,83],[663,85],[667,88],[668,89],[664,88],[659,88],[645,89]]],
  ["#969696", [[381,136],[383,135],[392,141],[395,135],[402,134],[409,134],[415,134],[417,135],[412,136],[400,137],[388,137],[408,136]]],
  ["#969696", [[201,159],[205,157],[208,161],[216,163],[223,156],[228,158],[233,160],[229,161],[223,162],[218,161],[212,159]]],
  ["#15e62a", [[324,155],[325,162],[327,160],[325,158],[330,156],[336,151],[345,150],[341,149],[337,150],[333,149],[326,149],[330,149]]],
  ["#3fd014", [[552,198],[564,197],[574,200],[574,205],[571,205],[568,205],[564,203],[559,201],[556,200],[553,199],[590,202],[589,201]]],
  ["#969696", [[44,247],[47,245],[57,248],[64,245],[70,246],[83,247],[78,247],[72,248],[51,246],[75,248]]],
  ["#969696", [[367,290],[371,289],[377,289],[388,288],[383,287],[393,285],[416,281],[412,282],[408,283],[403,284],[394,285],[399,284]]],
];
const plot = document.getElementById("plot");
for (const [color, points] of clusters) {
  for (const [x, y] of points) {
    const dot = document.createElementNS("http://www.w3.org/2000/svg", "circle");
    dot.setAttribute("cx", x);
    dot.setAttribute("cy", y);
    dot.setAttribute("r", 7);
    dot.setAttribute("fill", color);
    plot.append(dot);
  }
}
```
